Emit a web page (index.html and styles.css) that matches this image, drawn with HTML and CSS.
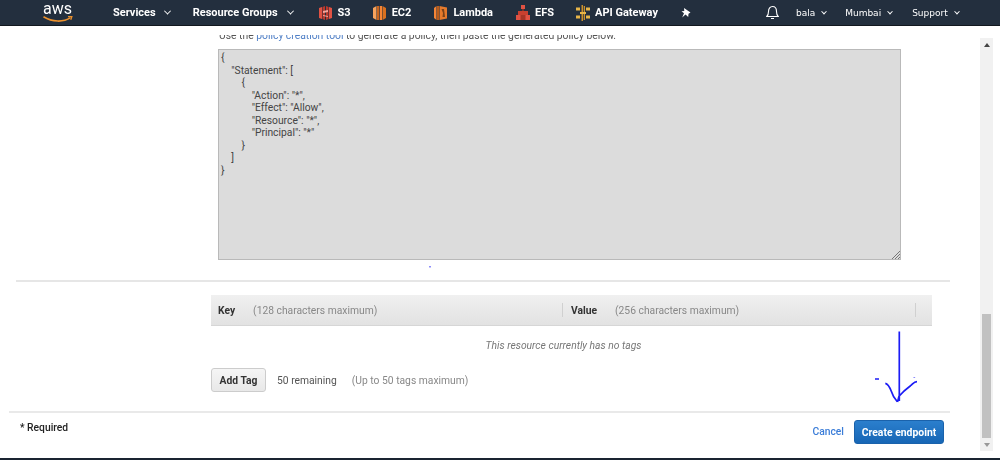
FILE: index.html
```html
<!DOCTYPE html>
<html lang="en">
<head>
<meta charset="utf-8">
<title>Create endpoint</title>
<link rel="stylesheet" href="styles.css">
</head>
<body>
<header class="nav">
  <div class="brand">
    <span class="aws-text">aws</span>
    <svg class="smile" width="31" height="7" viewBox="0 0 31 7"><path d="M.5 .8c9 5.500 20 5.500 27 .8" fill="none" stroke="#ec912d" stroke-width="1.700"/><path d="M25 .6l4-.3-1.200 3.600" fill="none" stroke="#ec912d" stroke-width="1.200"/></svg>
  </div>
  <span class="nav-item services">Services <i class="chev"></i></span>
  <span class="nav-item groups">Resource Groups <i class="chev"></i></span>
  <span class="svc s3"><svg width="13" height="16" viewBox="0 0 13 16"><path d="M0 3l3-1v12l-3-1zM13 3l-3-1v12l3-1z" fill="#e05243"/><path d="M3.500 2l2.500-1v14l-2.500-1zM7 1l2.500 1v12L7 15z" fill="#b8392c"/><path d="M4 6l5-1v2L4 8zM4 10l5 1v1l-5-1z" fill="#f2a59c"/></svg>S3</span>
  <span class="svc ec2"><svg width="13" height="16" viewBox="0 0 13 16"><path d="M0 3l3.500-2v14L0 13z" fill="#f7a35c"/><path d="M4 1h2.200v14H4z" fill="#c9661f"/><path d="M6.800 1h2.200v14H6.800z" fill="#f58536"/><path d="M9.500 1l3.500 2v10l-3.500 2z" fill="#d9701f"/></svg>EC2</span>
  <span class="svc lambda"><svg width="13" height="16" viewBox="0 0 13 16"><path d="M0 3l2.500-2v14L0 13z" fill="#f58536"/><path d="M3 1h2v14H3z" fill="#b85c1c"/><path d="M5.500 1l7.500 1.500v11L5.500 15z" fill="#e57a2c"/><path d="M7.500 4h2.500l1 8H8.500l.5-4z" fill="#7a4219"/></svg>Lambda</span>
  <span class="svc efs"><svg width="14" height="16" viewBox="0 0 14 16"><path d="M5 0h4v4H5z" fill="#e05243"/><path d="M6.200 4h1.600v3H6.200z" fill="#8c3123"/><path d="M2 6h10v4H2z" fill="#c9402f"/><path d="M0 10h14v5H0z" fill="#e05243"/><path d="M4.500 10h5v5h-5z" fill="#a63526"/></svg>EFS</span>
  <span class="svc api"><svg width="14" height="16" viewBox="0 0 14 16"><path d="M5.500 0h1.500v16H5.500zM7.700 1h1.300v14H7.700z" fill="#c98f2b"/><path d="M0 2.500h4v3H0zM0 10.500h4v3H0zM10 2.500h4v3h-4zM10 10.500h4v3h-4zM4 7h6v2H4z" fill="#e7b548"/></svg>API Gateway</span>
  <svg class="pin" width="10" height="10" viewBox="0 0 10 10"><path d="M3 0l6.500 4.500-2 1.200-.3 3.300L4.500 6.500 1.200 9.500 3 5.200.5 3.300l2.800-.2z" fill="#fff"/></svg>
  <svg class="bell" width="13" height="15" viewBox="0 0 13 15"><path d="M.8 11.500c1.400-1.500 1.700-3 1.700-5C2.500 3.500 4.200 1.500 6.500 1.500s4 2 4 5c0 2 .3 3.500 1.700 5zM5 13.500h3" fill="none" stroke="#fff" stroke-width="1.100"/></svg>
  <span class="nav-item alt bala">bala <i class="chev"></i></span>
  <span class="nav-item alt mumbai">Mumbai <i class="chev"></i></span>
  <span class="nav-item alt support">Support <i class="chev"></i></span>
</header>

<div class="viewport">
  <main class="content">
    <div class="help-clip">
      <p class="help">Use the <a>policy creation tool</a> to generate a policy, then paste the generated policy below.</p>
    </div>
    <div class="policy">{
    "Statement": [
        {
            "Action": "*",
            "Effect": "Allow",
            "Resource": "*",
            "Principal": "*"
        }
    ]
}<svg class="grip" width="8" height="8" viewBox="0 0 8 8"><path d="M0 8l8-8M3 8l5-5M6 8l2-2" stroke="#777" fill="none"/></svg></div>
    <hr class="rule">
    <section class="tags">
      <div class="tag-head">
        <div class="tag-col key"><b>Key</b><span>(128 characters maximum)</span></div>
        <div class="tag-col value"><b>Value</b><span>(256 characters maximum)</span></div>
      </div>
      <p class="empty">This resource currently has no tags</p>
      <div class="tag-actions">
        <button class="btn-plain">Add Tag</button>
        <span class="remaining">50 remaining</span>
        <span class="limit">(Up to 50 tags maximum)</span>
      </div>
    </section>
    <footer class="foot">
      <span class="required">* Required</span>
      <div class="foot-actions">
        <a class="cancel">Cancel</a>
        <button class="btn-primary">Create endpoint</button>
      </div>
    </footer>
  </main>
  <aside class="scrollbar">
    <i class="arrow up"></i>
    <div class="track"><div class="thumb"></div></div>
    <i class="arrow down"></i>
  </aside>
  <svg class="ink" width="1000" height="460" viewBox="0 0 1000 460"><path d="M899.300 331.500V401M885.300 383.300c3 .5 4.500 4 6 8 1 3.500 3 7 6 10.500M917 381.700c-3 0-4 2-6.500 4-4 3-8.500 7-11.500 10.500l-1.500 5.800M875 379h4M914.300 377.500v.6" fill="none" stroke="#1c1cf5" stroke-width="1.700"/><path d="M430 266v1.500" stroke="#1c1cf5"/></svg>
</div>
<div class="bottom-edge"></div>
</body>
</html>
```

FILE: styles.css
```css
* { box-sizing: border-box; }
html, body { margin: 0; height: 460px; overflow: hidden; background: #fff; }
body { font-family: Roboto, "Liberation Sans", sans-serif; font-size: 10.300px; color: #444; display: flex; flex-direction: column; }

.nav { height: 26px; flex: none; background: #232f3e; border-bottom: 1px solid #12181f; display: flex; align-items: center; color: #fff; font-weight: 700; font-size: 11px; white-space: nowrap; filter: blur(.25px); }
.brand { margin-left: 43px; width: 31px; flex: none; display: flex; flex-direction: column; }
.aws-text { font: 400 16px/12px Roboto, "Liberation Sans", sans-serif; color: #fff; }
.smile { display: block; margin-top: 1px; }
.nav-item { display: inline-flex; align-items: center; }
.chev { display: inline-block; width: 5px; height: 5px; border-right: 1.500px solid #fff; border-bottom: 1.500px solid #fff; transform: rotate(45deg) translate(-1px, -1px); margin-left: 9px; }
.services { margin-left: 39px; }
.groups { margin-left: 23px; }
.groups .chev { margin-left: 10px; }
.svc { display: inline-flex; align-items: center; gap: 6px; }
.s3 { margin-left: 26px; }
.ec2 { margin-left: 22px; }
.lambda { margin-left: 23px; }
.efs { margin-left: 23px; gap: 5px; }
.api { margin-left: 22px; gap: 5px; }
.pin { margin-left: 23px; }
.bell { margin-left: 75px; }
.alt { font-family: "DejaVu Sans", sans-serif; font-weight: 400; font-size: 9px; }
.alt .chev { width: 4px; height: 4px; margin-left: 7px; }
.bala { margin-left: 17px; }
.mumbai { margin-left: 19px; }
.support { margin-left: 20px; }

.viewport { flex: 1; min-height: 0; display: flex; position: relative; overflow: hidden; }
.content { width: 950px; flex: none; padding-left: 9px; overflow: hidden; display: flex; flex-direction: column; filter: blur(.25px); }
.help-clip { flex: none; margin: 9px 0 7px 210px; height: 7px; overflow: hidden; }
.help { margin: -5px 0 0; font-size: 10.350px; line-height: 12px; color: #555; white-space: nowrap; }
.help a { color: #4f7fc6; }
.policy { flex: none; margin-left: 209px; width: 683px; height: 211px; background: #dcdcdc; border: 1px solid #b9b9b9; padding: 2px 2px; font: 400 10.300px/12.500px Roboto, sans-serif; color: #444; white-space: pre; position: relative; }
.grip { position: absolute; right: 0; bottom: 0; }
.rule { flex: none; margin: 20px 0 0 7px; border: 0; height: 2px; background: #e6e6e6; }
.tags { flex: none; margin-left: 202px; width: 721px; }
.tag-head { margin-top: 13px; height: 31px; display: flex; background: linear-gradient(#f0f0f0, #e2e2e2); border-bottom: 1px solid #d6d6d6; }
.tag-col { display: flex; align-items: center; height: 100%; color: #888; }
.tag-col::after { content: ""; width: 1px; height: 14px; margin-left: auto; background: #d0d0d0; }
.tag-col b { color: #333; font-weight: 700; }
.key { width: 352px; padding-left: 7px; }
.key span { margin-left: 18px; }
.value { width: 353px; padding-left: 8px; }
.value span { margin-left: 18px; }
.empty { margin: 13px 0 0; padding-right: 16px; line-height: 13px; font-style: italic; color: #777; text-align: center; }
.tag-actions { margin-top: 16px; height: 24px; display: flex; align-items: center; }
.btn-plain { width: 55px; height: 24px; padding: 0; font: 700 10.300px Roboto, sans-serif; color: #333; background: linear-gradient(#f5f5f5, #e8e8e8); border: 1px solid #ccc; border-radius: 3px; }
.remaining { margin-left: 11px; color: #555; }
.limit { margin-left: 15px; color: #888; }
.foot { flex: none; margin-top: 19px; border-top: 2px solid #e9e9e9; height: 47px; display: flex; justify-content: space-between; padding: 7px 6px 0 11px; }
.required { color: #222; font-weight: 500; line-height: 15px; }
.foot-actions { display: flex; align-items: flex-start; gap: 10px; }
.cancel { color: #3b7dd8; font-weight: 500; line-height: 24px; }
.btn-primary { width: 90px; height: 24px; padding: 0; font: 700 10.400px Roboto, sans-serif; color: #fff; background: linear-gradient(#2b7fcd, #1766b5); border: 1px solid #1a62ab; border-radius: 3px; }

.scrollbar { position: absolute; left: 980px; top: 12px; width: 13px; height: 413px; background: #f1f1f1; display: flex; flex-direction: column; align-items: center; }
.track { flex: 1; width: 100%; display: flex; flex-direction: column; justify-content: flex-end; padding: 0 2px; }
.thumb { height: 124px; background: #c1c1c1; }
.arrow { flex: none; width: 0; height: 0; border-left: 3px solid transparent; border-right: 3px solid transparent; margin: 5px 0 4px; }
.arrow.up { border-bottom: 4px solid #444; }
.arrow.down { border-top: 4px solid #999; }
.ink { position: absolute; left: 0; top: -26px; pointer-events: none; }
.bottom-edge { height: 2px; flex: none; background: #1a2431; }
```
